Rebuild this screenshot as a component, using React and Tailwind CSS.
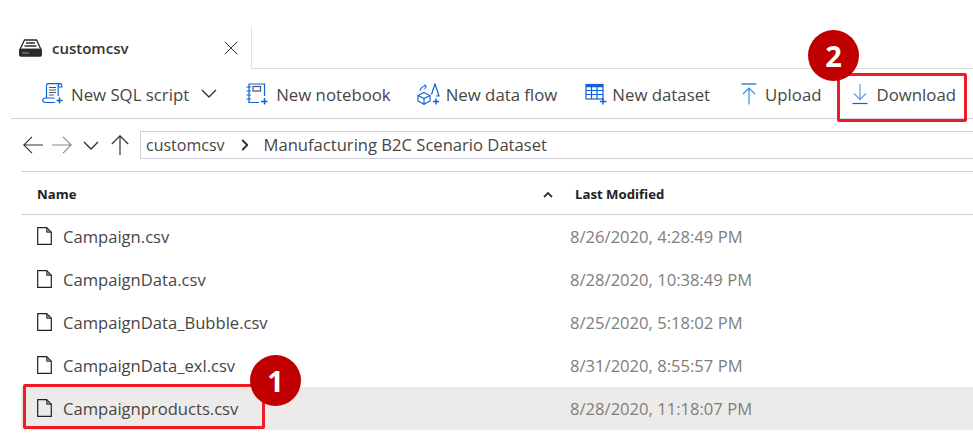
import { ChevronRight, X } from 'lucide-react'

const font = "[font-family:'Open_Sans','Noto_Sans',sans-serif]"

const files = [
  { name: 'Campaign.csv', modified: '8/26/2020, 4:28:49 PM' },
  { name: 'CampaignData.csv', modified: '8/28/2020, 10:38:49 PM' },
  { name: 'CampaignData_Bubble.csv', modified: '8/25/2020, 5:18:02 PM' },
  { name: 'CampaignData_exl.csv', modified: '8/31/2020, 8:55:57 PM' },
  { name: 'Campaignproducts.csv', modified: '8/28/2020, 11:18:07 PM', selected: true },
]

function DriveIcon() {
  return (
    <svg width="23" height="18" viewBox="0 0 23 18" fill="none" stroke="#2b2b2b" strokeWidth="1.3">
      <path d="M5.500 1h12l4.500 9.500H1z" />
      <path d="M7 4h9M5.500 7h12" />
      <rect x="0.700" y="10.500" width="21.600" height="6.500" rx="1" fill="#2b2b2b" />
      <path d="M3 14h7" stroke="#999" strokeWidth="1" />
    </svg>
  )
}

function FileIcon() {
  return (
    <svg width="15" height="18" viewBox="0 0 15 18" fill="none" stroke="#222" strokeWidth="1.200">
      <path d="M0.700 0.700h9l4.600 4.600v12H0.700z" />
      <path d="M9.700 0.700v4.600h4.600z" fill="#888" strokeWidth="0.800" />
    </svg>
  )
}

function ScriptIcon() {
  return (
    <svg width="22" height="21" viewBox="0 0 22 21" fill="none" stroke="#0f62d6" strokeWidth="1.200">
      <path d="M4.500 15V2.500A1.800 1.800 0 0 1 6.300 0.700H18a1.800 1.800 0 0 0-1.800 1.800V13" />
      <path d="M18 0.700a1.800 1.800 0 0 1 1.800 1.800v1.500h-3.500" />
      <g stroke="#44546a">
        <path d="M7 4.500h7M7 7h7M7 9.500h7M7 12h5" />
      </g>
      <path d="M13 19.500H3a2.200 2.200 0 0 1-2.200-2.200A2.200 2.200 0 0 1 3 15h9.500" />
      <path d="M17.500 14.500v6M14.500 17.500h6" strokeWidth="1.500" />
    </svg>
  )
}

function NotebookIcon() {
  return (
    <svg width="22" height="22" viewBox="0 0 22 22" fill="none" stroke="#0f62d6" strokeWidth="1.200">
      <path d="M18.500 13V1H3v18.500h10" />
      <path d="M0.500 4h4.500M0.500 8h4.500M0.500 12h4.500M0.500 16h4.500" />
      <rect x="7" y="3.500" width="7.500" height="4.500" stroke="#44546a" />
      <path d="M18.500 15v6.500M15 18.500h6.500" strokeWidth="1.500" />
    </svg>
  )
}

function DataFlowIcon() {
  return (
    <svg width="24" height="22" viewBox="0 0 24 22" fill="none" stroke="#0f62d6" strokeWidth="1.200">
      <path d="M7 9.500l6 3v5.500l-6 3.300-6-3.300v-5.500z" />
      <path d="M1 12.500l6 3 6-3M7 15.500v5.800" />
      <path d="M14.500 11.500L18 1l4 12h-3" />
      <path d="M3 8a5 5 0 0 1 6.500-4.500M9.500 3.500L7 1.500M9.500 3.500L7.500 6" stroke="#2f7fe0" />
      <path d="M19 15.500v6M16 18.500h6" strokeWidth="1.500" />
    </svg>
  )
}

function DatasetIcon() {
  return (
    <svg width="22" height="22" viewBox="0 0 22 22" fill="none" stroke="#0f62d6" strokeWidth="1.200">
      <rect x="1" y="1.500" width="17" height="14.500" />
      <path d="M1 3h17" strokeWidth="2.500" />
      <path d="M1 7.500h17M1 11.500h17M6.500 1.500V16M12 1.500V16" />
      <path d="M18 15v6.500M15 18.500h6.500" strokeWidth="1.500" />
    </svg>
  )
}

function UploadIcon() {
  return (
    <svg width="18" height="22" viewBox="0 0 18 22" fill="none" strokeWidth="1.200">
      <path d="M1.500 1h15" stroke="#0f62d6" />
      <path d="M9 21.500V5M3 11l6-6 6 6" stroke="#3f8ae6" />
    </svg>
  )
}

function DownloadIcon() {
  return (
    <svg width="18" height="22" viewBox="0 0 18 22" fill="none" strokeWidth="1.200">
      <path d="M1.500 20.500h15" stroke="#0f62d6" />
      <path d="M9 1v15M3 10.500l6 6 6-6" stroke="#5b9ce8" />
    </svg>
  )
}

function NavArrow({ color }) {
  return (
    <svg width="20" height="18" viewBox="0 0 20 18" fill="none" stroke={color} strokeWidth="1.200">
      <path d="M0.800 9H20M9 0.800L0.800 9 9 17.200" />
    </svg>
  )
}

function Caret({ width = 16, height = 9, color = '#333', strokeWidth = 1.400, className = '' }) {
  return (
    <svg width={width} height={height} viewBox={`0 0 ${width} ${height}`} fill="none" stroke={color} strokeWidth={strokeWidth} className={className}>
      <path d={`M1 1L${width / 2} ${height - 1}L${width - 1} 1`} />
    </svg>
  )
}

function ToolbarItem({ icon, label, className }) {
  return (
    <div className={`flex items-center ${className}`}>
      {icon}
      <span className="pt-[2px]">{label}</span>
    </div>
  )
}

function Badge({ children, className }) {
  return (
    <div className={`absolute flex h-[51px] w-[51px] items-center justify-center rounded-full bg-[#c00000] text-[29px] font-bold text-white ${className}`}>
      {children}
    </div>
  )
}

export default function App() {
  return (
    <div className={`relative h-[440px] w-[973px] overflow-hidden bg-white pt-[27px] text-[#484644] ${font}`}>
      <div className="flex h-[42px]">
        <div className="flex w-[252px] items-center border-r border-[#e1dfdd] pl-[19px] pr-[8px]">
          <DriveIcon />
          <span className="ml-[10px] flex-1 text-[15px] font-semibold text-[#333]">customcsv</span>
          <X size={24} strokeWidth={1} className="text-[#333]" />
        </div>
        <div className="flex-1 border-b border-[#e1dfdd]" />
      </div>

      <div className="ml-[11px] flex h-[50px] items-center border-b border-[#d2d0de] pl-[31px] text-[16.8px]">
        <ToolbarItem icon={<ScriptIcon />} label="New SQL script" className="gap-[7px]" />
        <Caret className="ml-[12px]" />
        <ToolbarItem icon={<NotebookIcon />} label="New notebook" className="ml-[29px] gap-[8px]" />
        <ToolbarItem icon={<DataFlowIcon />} label="New data flow" className="ml-[26px] gap-[5px]" />
        <ToolbarItem icon={<DatasetIcon />} label="New dataset" className="ml-[28px] gap-[5px]" />
        <ToolbarItem icon={<UploadIcon />} label="Upload" className="ml-[30px] gap-[7px]" />
        <ToolbarItem icon={<DownloadIcon />} label="Download" className="ml-[29px] gap-[8px]" />
      </div>

      <div className="ml-[21px] flex h-[53px] items-center border-b border-[#d2d0de] pl-[2px]">
        <NavArrow color="#333" />
        <div className="ml-[9px] rotate-180">
          <NavArrow color="#8a8886" />
        </div>
        <Caret className="ml-[11px]" />
        <div className="ml-[11px] rotate-90">
          <NavArrow color="#333" />
        </div>
        <div className="ml-[10px] flex h-[28px] flex-1 items-center border border-r-0 border-[#d2d0de] pl-[5px]">
          <span className="text-[16px]">customcsv</span>
          <ChevronRight size={18} strokeWidth={2.500} className="ml-[11px] text-[#333]" />
          <span className="ml-[10px] text-[16.6px]">Manufacturing B2C Scenario Dataset</span>
        </div>
      </div>

      <div className="ml-[21px] flex h-[43px] items-center border-b border-[#d2d0de] pt-[4px] text-[13.200px] font-bold text-[#222]">
        <span className="ml-[16px] w-[506px]">Name</span>
        <Caret width={10} height={6} strokeWidth={1.800} className="rotate-180" />
        <span className="ml-[22px]">Last Modified</span>
      </div>

      <div className="ml-[21px]">
        {files.map((file) => (
          <div
            key={file.name}
            className={`flex h-[43px] items-center text-[16.6px] ${file.selected ? 'bg-[#edebe9]' : ''}`}
          >
            <div className="ml-[16px] flex w-[533px] items-center gap-[11px]">
              <FileIcon />
              <span className="pt-[2px]">{file.name}</span>
            </div>
            <span className="pt-[2px] text-[#807e7c]">{file.modified}</span>
          </div>
        ))}
      </div>

      <div className="absolute left-[837px] top-[73px] h-[49px] w-[130px] rounded-[2px] border-[3px] border-[#ed1c24]" />
      <div className="absolute left-[23px] top-[384px] h-[45px] w-[242px] rounded-[2px] border-[3px] border-[#ed1c24]" />
      <Badge className="left-[250px] top-[355px]">1</Badge>
      <Badge className="left-[808px] top-[30px]">2</Badge>
    </div>
  )
}
